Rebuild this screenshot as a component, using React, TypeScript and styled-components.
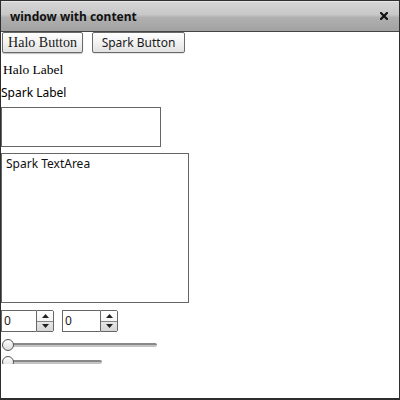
import React from "react";
import styled, { createGlobalStyle } from "styled-components";

const Global = createGlobalStyle`
  html, body { margin: 0; padding: 0; background: #fff; }
  * { box-sizing: border-box; }
`;

const Window = styled.div`
  width: 400px;
  height: 400px;
  border: 1px solid #2e2e2e;
  border-bottom-width: 2px;
  display: flex;
  flex-direction: column;
  background: #fff;
  overflow: hidden;
`;

const TitleBar = styled.div`
  height: 31px;
  flex: none;
  display: flex;
  align-items: center;
  justify-content: space-between;
  padding: 0 11px 0 9px;
  background: linear-gradient(#d6d6d6, #c8c8c8 45%, #b0b0b0 55%, #a2a2a2);
  border-bottom: 1px solid #444;
  box-shadow: inset 0 1px 0 #e8e8e8;
`;

const Title = styled.span`
  font-family: "Noto Sans", sans-serif;
  font-weight: bold;
  font-size: 12px;
  color: #111;
`;

const CloseIcon = styled.svg`
  display: block;
  margin-top: -1px;
`;

const Content = styled.div`
  display: flex;
  flex-direction: column;
  align-items: flex-start;
`;

const ButtonRow = styled.div`
  display: flex;
  align-items: flex-start;
  gap: 9px;
  margin-left: 1px;
`;

const Btn = styled.button<{ $halo?: boolean }>`
  margin: 0;
  padding: 0;
  width: ${(p) => (p.$halo ? 81 : 93)}px;
  height: 21px;
  border: 1px solid #6a6a6a;
  border-radius: 2px;
  background: linear-gradient(#ffffff, #f2f2f2 50%, #e2e2e2);
  box-shadow: ${(p) => (p.$halo ? "0 1px 1px rgba(0,0,0,0.25)" : "0 1px 0 rgba(0,0,0,0.1)")};
  font-family: ${(p) => (p.$halo ? '"Liberation Serif", serif' : '"Noto Sans", sans-serif')};
  font-size: ${(p) => (p.$halo ? 14 : 12)}px;
  color: #1a1a1a;
  line-height: 1;
`;

const Label = styled.div<{ $halo?: boolean }>`
  font-family: ${(p) => (p.$halo ? '"Liberation Serif", serif' : '"Noto Sans", sans-serif')};
  font-size: ${(p) => (p.$halo ? 13.5 : 12)}px;
  color: #000;
  line-height: ${(p) => (p.$halo ? 15 : 16)}px;
  margin-left: ${(p) => (p.$halo ? 2 : 0)}px;
  margin-top: ${(p) => (p.$halo ? 9 : 8)}px;
`;

const TextInput = styled.div`
  width: 160px;
  height: 40px;
  margin-top: 6px;
  border: 1px solid #666;
`;

const TextArea = styled.div`
  width: 188px;
  height: 150px;
  margin-top: 6px;
  border: 1px solid #666;
  padding: 2px 4px;
  font-family: "Noto Sans", sans-serif;
  font-size: 12px;
  line-height: 16px;
  color: #111;
`;

const StepperRow = styled.div`
  display: flex;
  gap: 8px;
  margin-top: 7px;
`;

const Stepper = styled.div<{ $w: number }>`
  display: flex;
  width: ${(p) => p.$w}px;
  height: 22px;
`;

const StepInput = styled.div`
  flex: 1;
  border: 1px solid #666;
  border-right: none;
  padding: 2px 2px;
  font-family: "Noto Sans", sans-serif;
  font-size: 12px;
  line-height: 16px;
  color: #222;
`;

const StepBtns = styled.div`
  width: 18px;
  display: flex;
  flex-direction: column;
  border: 1px solid #666;
  border-radius: 0 2px 2px 0;
  overflow: hidden;
`;

const StepBtn = styled.div<{ $down?: boolean }>`
  flex: 1;
  display: flex;
  align-items: center;
  justify-content: center;
  background: ${(p) => (p.$down ? "linear-gradient(#e6e6e6, #d6d6d6)" : "linear-gradient(#ffffff, #f4f4f4)")};
  border-top: ${(p) => (p.$down ? "1px solid #888" : "none")};
`;

const Arrow = ({ down }: { down?: boolean }) => (
  <svg width="7" height="4" viewBox="0 0 7 4">
    <polygon points={down ? "0,0 7,0 3.5,4" : "3.5,0 7,4 0,4"} fill="#222" />
  </svg>
);

const SliderBox = styled.div<{ $w: number; $h: number }>`
  position: relative;
  width: ${(p) => p.$w}px;
  height: ${(p) => p.$h}px;
  margin-left: 1px;
  overflow: hidden;
`;

const Track = styled.div`
  position: absolute;
  left: 1px;
  right: 0;
  top: 4px;
  height: 4px;
  border-radius: 2px;
  background: linear-gradient(#888 0, #888 50%, #c4c4c4 50%);
`;

const Thumb = styled.div`
  position: absolute;
  left: 0;
  top: 0;
  width: 12px;
  height: 12px;
  border-radius: 50%;
  border: 1px solid #555;
  background: linear-gradient(#ffffff, #dcdcdc);
`;

const Slider = ({ w, h, mt }: { w: number; h: number; mt: number }) => (
  <SliderBox $w={w} $h={h} style={{ marginTop: mt }}>
    <Track />
    <Thumb />
  </SliderBox>
);

export default function App() {
  return (
    <>
      <Global />
      <Window>
        <TitleBar>
          <Title>window with content</Title>
          <CloseIcon width="8" height="8" viewBox="0 0 8 8">
            <path d="M1 1 L7 7 M7 1 L1 7" stroke="#111" strokeWidth="2.2" strokeLinecap="square" />
          </CloseIcon>
        </TitleBar>
        <Content>
          <ButtonRow>
            <Btn $halo>Halo Button</Btn>
            <Btn>Spark Button</Btn>
          </ButtonRow>
          <Label $halo>Halo Label</Label>
          <Label>Spark Label</Label>
          <TextInput />
          <TextArea>Spark TextArea</TextArea>
          <StepperRow>
            <Stepper $w={53}>
              <StepInput>0</StepInput>
              <StepBtns>
                <StepBtn><Arrow /></StepBtn>
                <StepBtn $down><Arrow down /></StepBtn>
              </StepBtns>
            </Stepper>
            <Stepper $w={56}>
              <StepInput>0</StepInput>
              <StepBtns>
                <StepBtn><Arrow /></StepBtn>
                <StepBtn $down><Arrow down /></StepBtn>
              </StepBtns>
            </Stepper>
          </StepperRow>
          <Slider w={155} h={13} mt={7} />
          <Slider w={100} h={8} mt={4} />
        </Content>
      </Window>
    </>
  );
}
